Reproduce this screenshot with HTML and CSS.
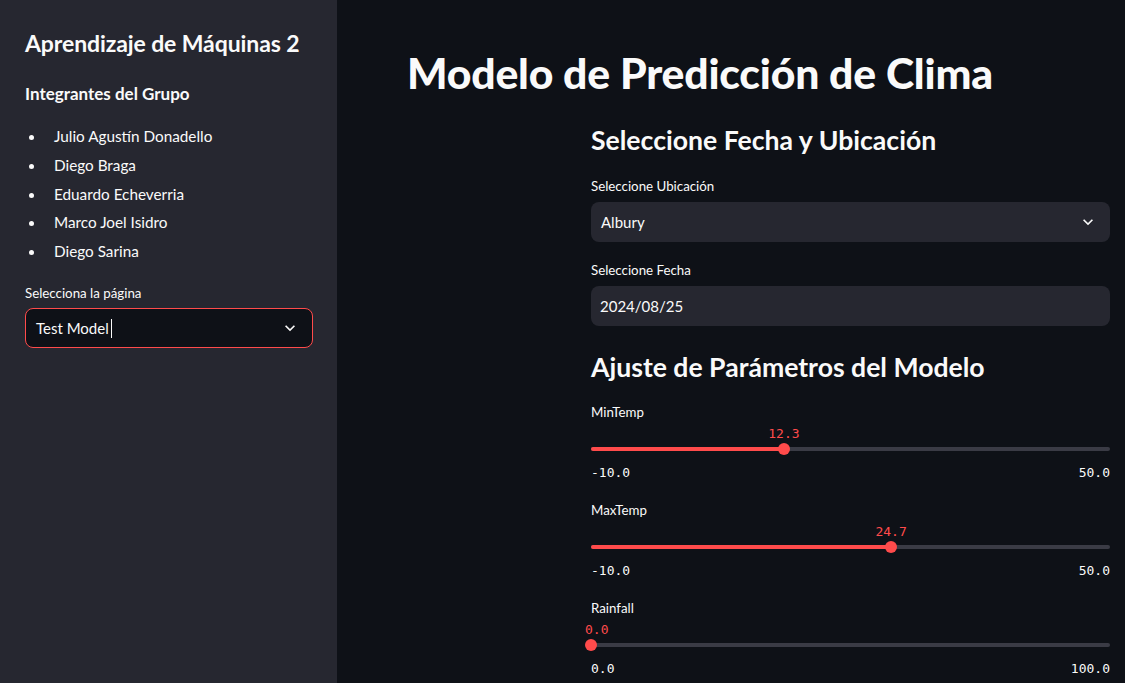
FILE: index.html
```html
<!DOCTYPE html>
<html lang="es">
<head>
<meta charset="utf-8">
<title>Modelo de Predicción de Clima</title>
<link rel="stylesheet" href="styles.css">
</head>
<body>
<div class="app">
  <aside class="sidebar">
    <h2 class="side-title">Aprendizaje de Máquinas 2</h2>
    <h3 class="side-sub">Integrantes del Grupo</h3>
    <ul class="members">
      <li>Julio Agustín Donadello</li>
      <li>Diego Braga</li>
      <li>Eduardo Echeverria</li>
      <li>Marco Joel Isidro</li>
      <li>Diego Sarina</li>
    </ul>
    <label class="label side-label">Selecciona la página</label>
    <div class="select select-focus">
      <span class="select-text">Test Model<span class="caret"></span></span>
      <svg class="chev" viewBox="0 0 24 24" width="20" height="20"><path d="M7.41 8.59L12 13.17l4.59-4.58L18 10l-6 6-6-6 1.41-1.41z" fill="#fafafa"/></svg>
    </div>
  </aside>
  <main class="main">
    <h1 class="title">Modelo de Predicción de Clima</h1>
    <div class="cols">
      <div class="col-left"></div>
      <div class="col-right">
        <h2 class="section">Seleccione Fecha y Ubicación</h2>
        <div class="field">
          <label class="label">Seleccione Ubicación</label>
          <div class="select">
            <span class="select-text">Albury</span>
            <svg class="chev" viewBox="0 0 24 24" width="20" height="20"><path d="M7.41 8.59L12 13.17l4.59-4.58L18 10l-6 6-6-6 1.41-1.41z" fill="#fafafa"/></svg>
          </div>
        </div>
        <div class="field">
          <label class="label">Seleccione Fecha</label>
          <div class="select date">
            <span class="select-text">2024/08/25</span>
          </div>
        </div>
        <h2 class="section section2">Ajuste de Parámetros del Modelo</h2>
        <div class="slider">
          <label class="label">MinTemp</label>
          <div class="track-wrap">
            <div class="track">
              <div class="fill" style="width:37.17%"></div>
              <div class="thumb" style="left:37.17%"><span class="val">12.3</span></div>
            </div>
          </div>
          <div class="ticks"><span>-10.0</span><span>50.0</span></div>
        </div>
        <div class="slider">
          <label class="label">MaxTemp</label>
          <div class="track-wrap">
            <div class="track">
              <div class="fill" style="width:57.83%"></div>
              <div class="thumb" style="left:57.83%"><span class="val">24.7</span></div>
            </div>
          </div>
          <div class="ticks"><span>-10.0</span><span>50.0</span></div>
        </div>
        <div class="slider">
          <label class="label">Rainfall</label>
          <div class="track-wrap">
            <div class="track">
              <div class="fill" style="width:0%"></div>
              <div class="thumb" style="left:0%"><span class="val val-start">0.0</span></div>
            </div>
          </div>
          <div class="ticks"><span>0.0</span><span>100.0</span></div>
        </div>
      </div>
    </div>
  </main>
</div>
</body>
</html>
```
FILE: styles.css
```css
* { box-sizing: border-box; }
html, body {
  margin: 0;
  padding: 0;
  height: 100%;
  overflow: hidden;
}
body {
  background: #0e1117;
  color: #fafafa;
  font-family: Lato, "Noto Sans", sans-serif;
}
.app {
  display: flex;
  height: 683px;
}
.sidebar {
  width: 337px;
  flex: none;
  background: #262730;
  padding: 29px 24px 0 25px;
}
.side-title {
  margin: 0;
  font-size: 23px;
  font-weight: 700;
  line-height: 28px;
  letter-spacing: -0.1px;
}
.side-sub {
  margin: 26px 0 0;
  font-size: 17px;
  font-weight: 700;
  line-height: 22px;
}
.members {
  margin: 21px 0 0;
  padding: 0 0 0 29px;
  list-style: none;
  font-size: 15.3px;
}
.members li {
  position: relative;
  line-height: 20px;
  margin-bottom: 8.75px;
}
.members li::before {
  content: "";
  position: absolute;
  left: -25px;
  top: 9px;
  width: 5px;
  height: 5px;
  border-radius: 50%;
  background: #fafafa;
}
.label {
  display: block;
  font-size: 13.3px;
  line-height: 18px;
  color: #fafafa;
}
.side-label {
  margin-top: 23px;
  margin-bottom: 6px;
}
.select {
  display: flex;
  align-items: center;
  justify-content: space-between;
  height: 40px;
  border-radius: 8px;
  background: #262730;
  padding: 0 12px 0 10px;
  font-size: 15px;
}
.select-focus {
  background: #0e1117;
  border: 1px solid #ff4b4b;
  padding-left: 10px;
}
.select-text {
  display: flex;
  align-items: center;
}
.caret {
  display: inline-block;
  width: 1px;
  height: 19px;
  background: #fafafa;
  margin-left: 2px;
}
.date { padding-left: 9px; }
.main {
  flex: 1;
  padding: 48px 15px 0 70px;
}
.title {
  margin: 0;
  font-size: 42.7px;
  font-weight: 900;
  line-height: 50px;
  letter-spacing: -0.2px;
}
.cols {
  display: grid;
  grid-template-columns: 1fr 519px;
  gap: 16px;
}
.section {
  margin: 24px 0 0;
  font-size: 26.6px;
  font-weight: 700;
  line-height: 36px;
}
.section2 { margin-top: 23px; }
.field { margin-top: 19px; }
.field + .field { margin-top: 19px; }
.field .label { margin-bottom: 7px; }
.slider { margin-top: 18px; height: 85px; }
.slider + .slider { margin-top: 13px; }
.track-wrap {
  padding-top: 26px;
}
.track {
  position: relative;
  height: 4px;
  border-radius: 2px;
  background: #3a3b45;
}
.fill {
  height: 4px;
  border-radius: 2px;
  background: #ff4b4b;
}
.thumb {
  position: absolute;
  top: -4px;
  width: 12px;
  height: 12px;
  margin-left: -6px;
  border-radius: 50%;
  background: #ff4b4b;
}
.val {
  position: absolute;
  bottom: 13px;
  left: 50%;
  transform: translateX(-50%);
  font-family: "DejaVu Sans Mono", monospace;
  font-size: 13px;
  line-height: 16px;
  color: #ff4b4b;
  white-space: nowrap;
}
.val-start {
  left: 0;
  transform: none;
}
.ticks {
  display: flex;
  justify-content: space-between;
  margin-top: 14px;
  font-family: "DejaVu Sans Mono", monospace;
  font-size: 13px;
  line-height: 16px;
}
```
